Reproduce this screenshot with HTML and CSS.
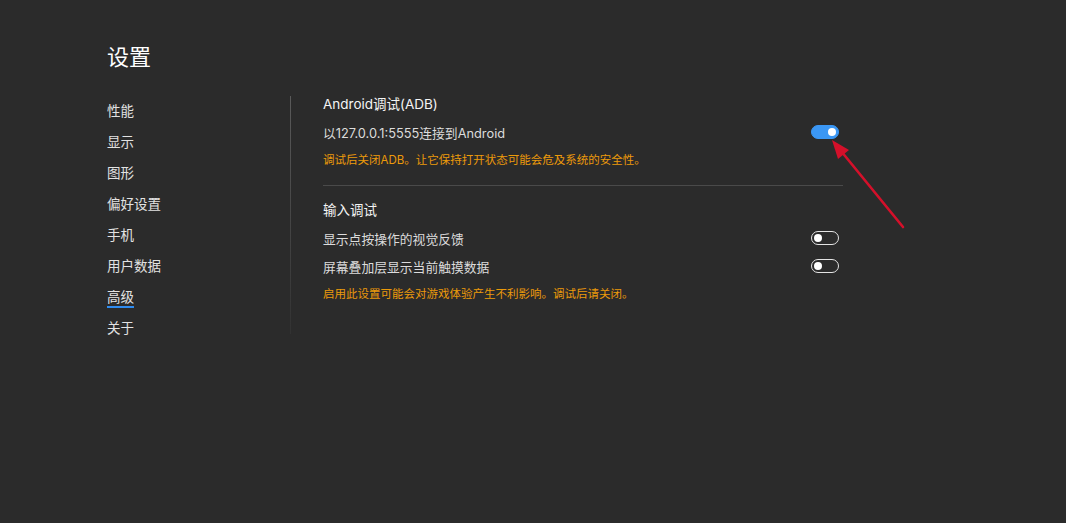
FILE: index.html
```html
<!DOCTYPE html>
<html lang="zh-CN">
<head>
    <meta charset="UTF-8">
    <title>设置</title>
    <link rel="stylesheet" href="styles.css">
</head>
<body>
    <div class="page">
        <h1 class="title">设置</h1>
        <div class="layout">
            <ul class="nav">
                <li>性能</li>
                <li>显示</li>
                <li>图形</li>
                <li>偏好设置</li>
                <li>手机</li>
                <li>用户数据</li>
                <li class="active"><span>高级</span></li>
                <li>关于</li>
            </ul>
            <div class="divider"></div>
            <div class="content">
                <div class="group">
                    <h2>Android调试(ADB)</h2>
                    <div class="row">
                        <span>以127.0.0.1:5555连接到Android</span>
                        <span class="toggle on"></span>
                    </div>
                    <p class="warn">调试后关闭ADB。让它保持打开状态可能会危及系统的安全性。</p>
                </div>
                <hr class="sep">
                <div class="group">
                    <h2>输入调试</h2>
                    <div class="row">
                        <span>显示点按操作的视觉反馈</span>
                        <span class="toggle"></span>
                    </div>
                    <div class="row">
                        <span>屏幕叠加层显示当前触摸数据</span>
                        <span class="toggle"></span>
                    </div>
                    <p class="warn">启用此设置可能会对游戏体验产生不利影响。调试后请关闭。</p>
                </div>
            </div>
        </div>
    </div>
    <svg class="arrow" width="1066" height="523" viewBox="0 0 1066 523">
        <line x1="903" y1="227" x2="841" y2="151" stroke="#d4102a" stroke-width="2.6" stroke-linecap="round"/>
        <polygon points="832,140 849,150 838,159" fill="#d4102a"/>
    </svg>
</body>
</html>
```

FILE: styles.css
```css
body {
    margin: 0;
    background-color: #2b2b2b;
    color: #dedede;
    font-family: Inter, "Noto Sans CJK SC", sans-serif;
    height: 523px;
    overflow: hidden;
}
.page {
    padding: 40px 0 0 107px;
}
.title {
    margin: 0;
    font-size: 22px;
    font-weight: 400;
    line-height: 34px;
    color: #ffffff;
}
.layout {
    display: flex;
    margin-top: 20px;
}
.nav {
    list-style: none;
    margin: 0;
    padding: 2px 0 0 0;
    width: 183px;
}
.nav li {
    font-size: 13.5px;
    line-height: 31px;
    color: #e2e2e2;
}
.nav .active span {
    text-decoration: underline;
    text-decoration-color: #2f8cf0;
    text-decoration-thickness: 2px;
    text-underline-offset: 4px;
}
.divider {
    width: 1px;
    height: 238px;
    margin-top: 2px;
    background: linear-gradient(#5a5a5a, rgba(90, 90, 90, 0.15));
}
.content {
    width: 520px;
    padding-left: 32px;
}
.group h2 {
    margin: 0;
    font-size: 13.5px;
    font-weight: 400;
    line-height: 20px;
    color: #f4f4f4;
}
.row {
    display: flex;
    align-items: center;
    justify-content: space-between;
    height: 28px;
    font-size: 12.8px;
    color: #dcdcdc;
}
.group h2 + .row {
    margin-top: 4px;
}
.warn {
    margin: 6px 0 0 0;
    font-size: 11.5px;
    line-height: 16px;
    color: #ec9a0a;
}
.sep {
    border: none;
    border-top: 1px solid #4a4a4a;
    margin: 17px 0 14px 0;
}
.toggle {
    box-sizing: border-box;
    width: 28px;
    height: 14px;
    margin-right: 4px;
    border: 1.5px solid #e4e4e4;
    border-radius: 7px;
    display: flex;
    align-items: center;
    padding: 0 2px;
}
.toggle::before {
    content: "";
    width: 8px;
    height: 8px;
    border-radius: 50%;
    background: #ffffff;
}
.toggle.on {
    background: #3b97f4;
    border-color: #3b97f4;
    justify-content: flex-end;
}
.arrow {
    position: absolute;
    left: 0;
    top: 0;
}
```
